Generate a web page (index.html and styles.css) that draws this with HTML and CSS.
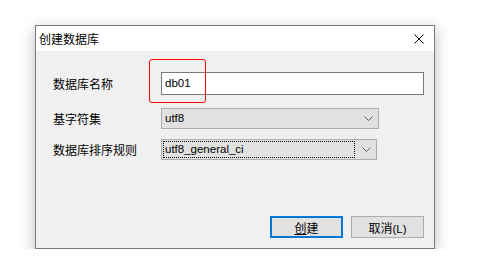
FILE: index.html
```html
<!DOCTYPE html>
<html lang="zh-CN">
<head>
	<meta charset="UTF-8">
	<title>创建数据库</title>
	<link rel="stylesheet" href="styles.css">
</head>
<body>
	<div class="dialog">
		<div class="titleBar">
			<span class="title">创建数据库</span>
			<svg class="close" width="10" height="10" viewBox="0 0 10 10">
				<path d="M0.5 0.5 L9.5 9.5 M9.5 0.5 L0.5 9.5" stroke="#000" stroke-width="1" fill="none"/>
			</svg>
		</div>
		<div class="content">
			<div class="row rowName">
				<label class="label">数据库名称</label>
				<div class="nameField">
					<input class="textInput" type="text" value="db01">
					<div class="highlight"></div>
				</div>
			</div>
			<div class="row rowCharset">
				<label class="label">基字符集</label>
				<div class="combo comboCharset">
					<span class="comboText">utf8</span>
					<svg class="chevron" width="9" height="5" viewBox="0 0 9 5"><path d="M0.5 0.5 L4.5 4.5 L8.5 0.5" stroke="#606060" fill="none"/></svg>
				</div>
			</div>
			<div class="row rowCollation">
				<label class="label">数据库排序规则</label>
				<div class="combo comboCollation">
					<span class="comboText focused">utf8_general_ci</span>
					<svg class="chevron" width="9" height="5" viewBox="0 0 9 5"><path d="M0.5 0.5 L4.5 4.5 L8.5 0.5" stroke="#606060" fill="none"/></svg>
				</div>
			</div>
			<div class="buttons">
				<button class="btn btnDefault"><u>创</u>建</button>
				<button class="btn">取消<span class="latin">(L)</span></button>
			</div>
		</div>
	</div>
</body>
</html>
```
FILE: styles.css
```css
body {
	margin: 0;
	background: #fff;
	font-family: "Noto Sans CJK SC", "Liberation Sans", sans-serif;
	font-size: 12px;
	color: #000;
}
.dialog {
	margin: 25px 0 0 35px;
	width: 398px;
	height: 222px;
	border: 1px solid #7a7a7a;
	background: #f0f0f0;
	box-shadow: 0 4px 14px rgba(0, 0, 0, 0.28);
	display: flex;
	flex-direction: column;
}
.titleBar {
	height: 25px;
	background: #fff;
	display: flex;
	align-items: center;
	padding: 0 10px 0 3px;
}
.title {
	flex: 1;
	line-height: 16px;
}
.content {
	flex: 1;
	padding: 21px 10px 10px 17px;
	display: flex;
	flex-direction: column;
}
.row {
	display: flex;
	align-items: center;
}
.label {
	width: 108px;
	line-height: 16px;
}
.rowCharset { margin-top: 13px; }
.rowCollation { margin-top: 10px; }
.nameField {
	position: relative;
}
.textInput {
	box-sizing: border-box;
	width: 263px;
	height: 23px;
	margin: 0;
	border: 1px solid #7a7a7a;
	padding: 0 3px 2px;
	font-family: "Liberation Sans", "Noto Sans CJK SC", sans-serif;
	font-size: 11.5px;
	color: #000;
	background: #fff;
	outline: none;
}
.highlight {
	position: absolute;
	left: -12px;
	top: -13px;
	width: 57px;
	height: 44px;
	border: 1px solid #ff0000;
	border-radius: 3px;
	box-sizing: border-box;
	pointer-events: none;
}
.combo {
	box-sizing: border-box;
	height: 21px;
	border: 1px solid #adadad;
	background: #e1e1e1;
	display: flex;
	align-items: center;
	padding: 0 5px 0 3px;
	font-family: "Liberation Sans", "Noto Sans CJK SC", sans-serif;
	font-size: 11.5px;
}
.comboCharset { width: 218px; }
.comboCollation { width: 216px; padding-left: 1px; }
.comboText {
	flex: 1;
	line-height: 15px;
}
.comboText.focused {
	border: 1px dotted #000;
	margin-right: 7px;
	padding-left: 1px;
}
.buttons {
	margin-top: auto;
	display: flex;
	justify-content: flex-end;
	gap: 8px;
}
.btn {
	box-sizing: border-box;
	width: 73px;
	height: 22px;
	margin: 0;
	border: 1px solid #adadad;
	background: #e1e1e1;
	font: inherit;
	font-size: 12px;
	color: #000;
	padding: 0;
}
.latin {
	font-family: "Liberation Sans", sans-serif;
	font-size: 11.5px;
}
.btnDefault {
	border: 2px solid #0078d7;
}
```
